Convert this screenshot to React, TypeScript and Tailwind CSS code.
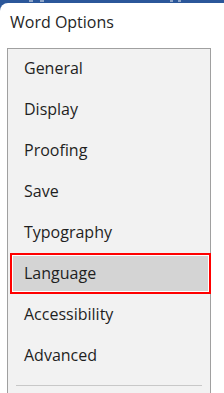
const items = ["General", "Display", "Proofing", "Save", "Typography", "Language", "Accessibility", "Advanced"];

export default function App() {
  return (
    <div className="h-[393px] w-[224px] overflow-hidden bg-[#2b579a]" style={{ fontFamily: '"Open Sans", "Noto Sans", sans-serif' }}>
      {/* title bar bits peeking above the dialog */}
      <div className="flex h-[3px] items-start">
        <div className="ml-[29px] flex gap-[7px]">
          <span className="h-[2px] w-[4px] bg-[#8ea5c8]" />
          <span className="h-[2px] w-[4px] bg-[#8ea5c8]" />
        </div>
        <div className="ml-auto mr-[43px] flex gap-[5px]">
          <span className="h-[2px] w-[3px] bg-[#8ea5c8]" />
          <span className="h-[2px] w-[3px] bg-[#8ea5c8]" />
        </div>
      </div>
      <div className="h-[390px] rounded-tl-[8px] bg-white">
        <div className="pl-[10px] pt-[7px] text-[16px] leading-[24px] text-[#262626]">Word Options</div>
        <div className="ml-[7px] mt-[14px] h-[400px] w-[204px] border-x border-t border-[#a0a0a0] bg-[#f2f2f2]">
          <ul className="-mt-px">
            {items.map((item) => (
              <li key={item} className="h-[41px]">
                {item === "Language" ? (
                  <div className="-mr-[1px] ml-[2px] h-[41px] border-2 border-[#ff0000] bg-white p-px">
                    <div className="h-full bg-[#d4d4d4] pl-[11px] text-[16px] leading-[35px] text-[#1f1f1f]">{item}</div>
                  </div>
                ) : (
                  <div className="pl-[16px] text-[16px] leading-[41px] text-[#1f1f1f]">{item}</div>
                )}
              </li>
            ))}
          </ul>
          <div className="ml-[8px] mt-[9px] h-px w-[186px] bg-[#c8c8c8]" />
        </div>
      </div>
    </div>
  );
}
